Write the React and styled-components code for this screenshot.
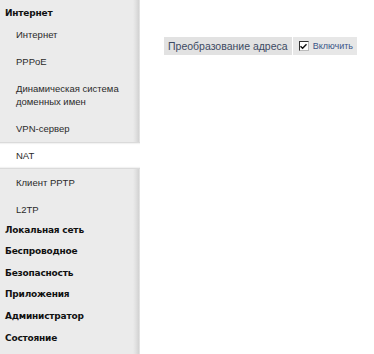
import styled, { createGlobalStyle } from 'styled-components';

const GlobalStyle = createGlobalStyle`
  html, body {
    margin: 0;
    padding: 0;
    background: #fff;
  }
  body {
    font-family: 'DejaVu Sans', 'Liberation Sans', sans-serif;
  }
`;

const sections = [
  {
    title: 'Интернет',
    items: ['Интернет', 'PPPoE', 'Динамическая система доменных имен', 'VPN-сервер', 'NAT', 'Клиент PPTP', 'L2TP'],
    active: 'NAT',
  },
  { title: 'Локальная сеть' },
  { title: 'Беспроводное' },
  { title: 'Безопасность' },
  { title: 'Приложения' },
  { title: 'Администратор' },
  { title: 'Состояние' },
];

function App() {
  return (
    <>
      <GlobalStyle />
      <Page>
        <Sidebar>
          {sections.map((s) => (
            <Section key={s.title}>
              <SectionTitle>{s.title}</SectionTitle>
              {s.items && (
                <SubList>
                  {s.items.map((item) => (
                    <SubItem key={item} $active={item === s.active}>
                      {item}
                    </SubItem>
                  ))}
                </SubList>
              )}
            </Section>
          ))}
        </Sidebar>
        <Content>
          <FormTable>
            <tbody>
              <tr>
                <LabelCell>Преобразование адреса</LabelCell>
                <ValueCell>
                  <CheckLabel>
                    <CheckBox>
                      <svg width="7" height="7" viewBox="0 0 7 7">
                        <path d="M0.5 3.2 L2.6 5.3 L6.5 1.2" fill="none" stroke="#111" strokeWidth="1.4" />
                      </svg>
                    </CheckBox>
                    Включить
                  </CheckLabel>
                </ValueCell>
              </tr>
            </tbody>
          </FormTable>
        </Content>
      </Page>
    </>
  );
}

const Page = styled.div`
  display: flex;
  height: 354px;
  overflow: hidden;
`;

const Sidebar = styled.nav`
  width: 140px;
  flex-shrink: 0;
  background: linear-gradient(to right, #ebebeb 0, #ebebeb 133px, #e0e0e0 136px, #d2d2d2 139px, #f3f3f3 140px);
  padding-top: 3px;
`;

const Section = styled.div`
  display: flex;
  flex-direction: column;
`;

const SectionTitle = styled.div`
  font-size: 9px;
  font-weight: bold;
  color: #111;
  padding: 0 5px;
  height: 21.6px;
  line-height: 21.6px;
  letter-spacing: -0.2px;
  white-space: nowrap;
`;

const SubList = styled.div`
  display: flex;
  flex-direction: column;
  margin: -4px 0 -3px;
`;

const SubItem = styled.div`
  font-family: 'Liberation Sans', sans-serif;
  font-size: 9.5px;
  color: #2a2a2a;
  padding: 7px 16px;
  line-height: 13px;
  background: ${(p) => (p.$active ? '#fff' : 'transparent')};
  box-shadow: ${(p) =>
    p.$active ? 'inset 0 3px 2px -2px #cdcdcd, inset 0 -3px 2px -2px #cdcdcd' : 'none'};
`;

const Content = styled.main`
  flex: 1;
  padding: 37px 0 0 24px;
`;

const FormTable = styled.table`
  border-collapse: separate;
  border-spacing: 1px 0;
  margin-left: -1px;
`;

const LabelCell = styled.td`
  background: #e2e2e2;
  color: #3d4a63;
  font-family: 'Liberation Sans', sans-serif;
  font-size: 10.5px;
  height: 18px;
  padding: 0 4px 0 4px;
  white-space: nowrap;
`;

const ValueCell = styled.td`
  background: #e7e7e7;
  padding: 0 4px 0 6px;
  white-space: nowrap;
`;

const CheckLabel = styled.label`
  display: flex;
  align-items: center;
  gap: 4px;
  font-family: 'Liberation Sans', sans-serif;
  font-size: 9px;
  color: #3b5587;
`;

const CheckBox = styled.span`
  display: inline-flex;
  align-items: center;
  justify-content: center;
  box-sizing: border-box;
  width: 10px;
  height: 10px;
  background: #fff;
  border: 1px solid #333;
  border-right-color: #bbb;
  border-bottom-color: #bbb;
`;

export default App;
